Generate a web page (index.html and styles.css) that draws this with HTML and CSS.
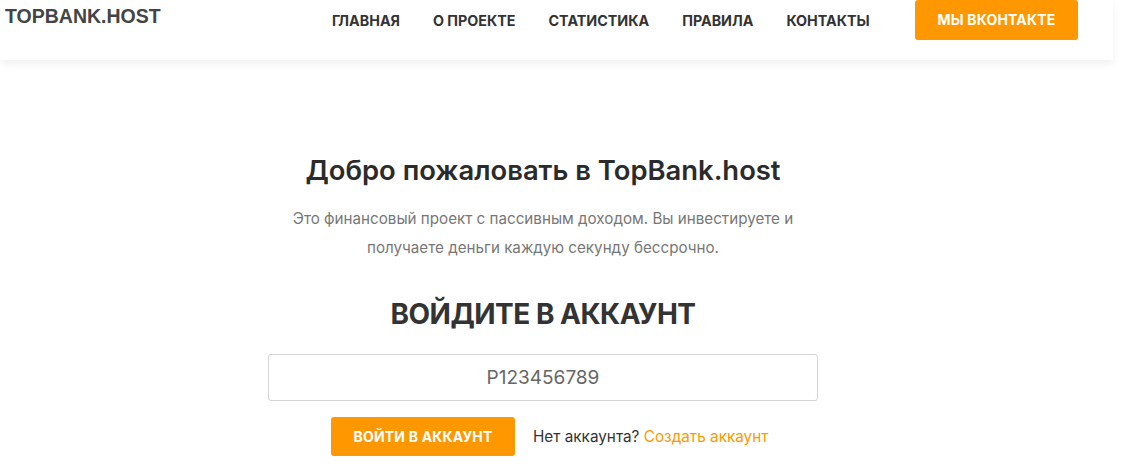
FILE: index.html
```html
<!DOCTYPE html>
<html lang="ru">
<head>
	<meta charset="UTF-8">
	<title>TopBank.host — вход</title>
	<link rel="stylesheet" href="styles.css">
</head>
<body>
	<div class="header">
		<div class="logo">TOPBANK.HOST</div>
		<ul class="nav">
			<li><a href="#">ГЛАВНАЯ</a></li>
			<li><a href="#">О ПРОЕКТЕ</a></li>
			<li><a href="#">СТАТИСТИКА</a></li>
			<li><a href="#">ПРАВИЛА</a></li>
			<li><a href="#">КОНТАКТЫ</a></li>
		</ul>
		<a href="#" class="btn vk">МЫ ВКОНТАКТЕ</a>
	</div>

	<div class="main">
		<h1>Добро пожаловать в TopBank.host</h1>
		<p class="lead">Это финансовый проект с пассивным доходом. Вы инвестируете и<br>получаете деньги каждую секунду бессрочно.</p>
		<h2>ВОЙДИТЕ В АККАУНТ</h2>
		<form class="login">
			<input type="text" class="field" value="P123456789">
			<div class="row">
				<a href="#" class="btn enter">ВОЙТИ В АККАУНТ</a>
				<span class="noacc">Нет аккаунта? <a href="#">Создать аккаунт</a></span>
			</div>
		</form>
	</div>
</body>
</html>
```

FILE: styles.css
```css
*{margin:0;padding:0;box-sizing:border-box;}
body{
	font-family: Inter, "Noto Sans", sans-serif;
	background: #fff;
	color: #333;
	overflow: hidden;
}
a{text-decoration:none;}

.header{
	width: 1113px;
	height: 60px;
	background: #fff;
	box-shadow: 0 4px 8px rgba(0,0,0,.06);
	display: flex;
	align-items: flex-start;
}
.logo{
	font-family: "Liberation Sans", Arial, sans-serif;
	font-weight: bold;
	font-size: 19.5px;
	color: #444;
	margin: 5px 0 0 5px;
	width: 310px;
}
.nav{
	list-style: none;
	display: flex;
	gap: 33px;
	margin-top: 10px;
	margin-left: 17px;
}
.nav a{
	font-size: 14.3px;
	font-weight: 700;
	color: #333;
}
.btn{
	display: inline-block;
	background: #ff9800;
	color: #fff;
	font-weight: 700;
	border-radius: 3px;
	text-align: center;
	letter-spacing: 0.2px;
}
.vk{
	margin-left: auto;
	margin-right: 35px;
	width: 163px;
	height: 40px;
	line-height: 40px;
	font-size: 14px;
}

.main{
	width: 1086px;
	text-align: center;
	padding-top: 90px;
}
h1{
	font-size: 27.4px;
	font-weight: 600;
	color: #2b2b2b;
	line-height: 40px;
}
.lead{
	margin-top: 14px;
	font-size: 15.2px;
	line-height: 29px;
	color: #777;
}
h2{
	margin-top: 32px;
	font-size: 28px;
	letter-spacing: -0.5px;
	font-weight: 700;
	color: #333;
	line-height: 40px;
}
.login{
	margin-top: 20px;
}
.field{
	display: block;
	width: 550px;
	height: 47px;
	margin: 0 0 0 268px;
	border: 1px solid #d5d5d5;
	border-radius: 3px;
	text-align: center;
	font-family: Inter, "Noto Sans", sans-serif;
	font-size: 19px;
	color: #666;
	outline: none;
}
.row{
	display: flex;
	align-items: center;
	margin: 16px 0 0 331px;
	gap: 18px;
}
.enter{
	width: 184px;
	height: 39px;
	line-height: 39px;
	font-size: 14px;
}
.noacc{
	font-size: 15.3px;
	color: #333;
}
.noacc a{color:#ff9800;}
```
